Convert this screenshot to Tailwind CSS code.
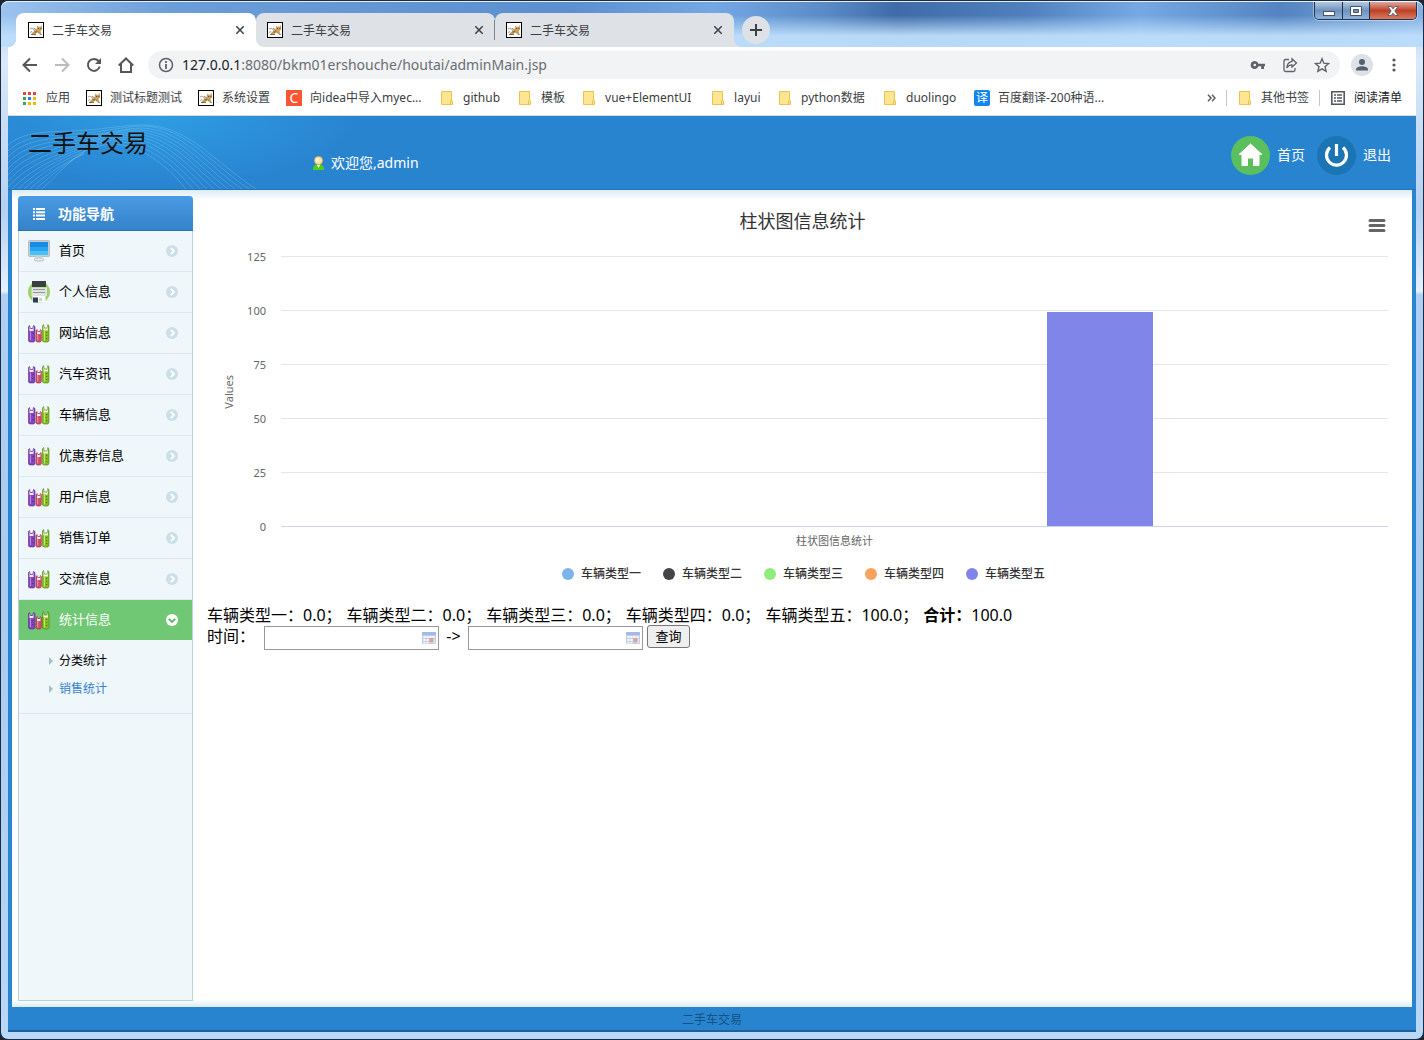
<!DOCTYPE html>
<html lang="zh-CN">
<head>
<meta charset="utf-8">
<title>二手车交易</title>
<script src="https://cdn.jsdelivr.net/npm/@tailwindcss/browser@4"></script>
</head>
<body class="font-['Noto_Sans','Noto_Sans_CJK_SC',sans-serif] text-xs text-black bg-[#1c2430]">

<svg class="hidden" aria-hidden="true">
  <symbol id="cat" viewBox="0 0 16 16">
    <rect x=".5" y=".5" width="15" height="15" fill="#fff" stroke="#000"/>
    <path d="M3 12.500 5 10 7.500 8.500 9 6 9 3.500 10.500 4.800 12.500 4.800 14 3 14 7.500 12.500 9 13.500 12.500 11.500 11.500 9 10.500 7 12.500Z" fill="#c99f5a"/>
    <path d="M2 7 4 6 6 7.500 7 9M2 10.500 4 9.500M10 10 12 12.500H14" stroke="#8a8378" stroke-width=".8" fill="none"/>
    <path d="M3 12.500h5M6 6.500 8 7.500" stroke="#5b5046" stroke-width=".8"/>
    <path d="M10 6.500h1M12.300 6.500h1" stroke="#5c4420" stroke-width=".9"/>
    <path d="M6 9.500 9 8.500 9.500 10 7 11Z" fill="#a5722b"/>
  </symbol>
  <symbol id="folder" viewBox="0 0 16 16">
    <path d="M2.500 1.500h10v10h1v3h-11z" fill="#ffe591" stroke="#e8c54a"/>
    <path d="M11.500 14v-3h2v3z" fill="#ffeeb0" stroke="#e8c54a"/>
  </symbol>
  <symbol id="books" viewBox="0 0 22 22">
    <path d="M.5 4.500 1.500 3.500l.8 3h2.400l.8-3L7 4.500v14L6 20H1.500l-1-1z" fill="#8645bd" stroke="#5d2a91" stroke-width=".6"/>
    <path d="M1.500 4l.8 3h2.400l.8-3v5h-4z" fill="#f2eef7"/><path d="M2.500 9.500v8.500" stroke="#b488dc"/>
    <path d="M8 8.500 9 7.500l.6 2h2.200l.6-2 1 1v10l-1 1.500H9l-1-1z" fill="#cf5063" stroke="#97304a" stroke-width=".6"/>
    <path d="M9 8l.6 2h2.200l.6-2v4H9z" fill="#faeff0"/><path d="M9.700 12v6.500" stroke="#f09aa5"/>
    <path d="M14.500 4 15.500 2.500l.7 3.500h3l.7-3.500L21 4v14.500l-1 1.500h-4.500l-1-1z" fill="#86bd22" stroke="#527f10" stroke-width=".6"/>
    <path d="M15.500 3l.7 3.500h3l.7-3.500v5.500h-4.400z" fill="#f3f9e2"/><path d="M16.500 9v9.500" stroke="#c8e86c"/>
    <path d="M18.700 10v1m0 2v1m0 2v1" stroke="#3f6a0c" stroke-width="1"/><path d="M5 11v1m0 3v1" stroke="#4c1a7d"/>
  </symbol>
  <symbol id="go" viewBox="0 0 12 12">
    <circle cx="6" cy="6" r="6" fill="#cbdfe9"/><path d="M4.800 2.800 8 6 4.800 9.200" fill="none" stroke="#fff" stroke-width="1.900"/>
  </symbol>
  <symbol id="tri" viewBox="0 0 4 8"><path d="M0 0 4 4 0 8z" fill="#a9bdc8"/></symbol>
  <symbol id="x" viewBox="0 0 10 10"><path d="M1.300 1.300l7.400 7.400m0-7.400-7.400 7.400" stroke="#3c4043" stroke-width="1.500"/></symbol>
  <symbol id="cal" viewBox="0 0 14 12">
    <rect width="14" height="12" rx="1" fill="#c3cfe6"/><rect width="14" height="3" rx="1" fill="#a3b9e6"/>
    <path d="M1.500 4h2v2h-2zM4.500 4h2v2h-2zM7.500 4h2v2h-2zM10.500 4h2v2h-2zM1.500 7h2v2h-2zM4.500 7h2v2h-2zM1.500 10h2v1.500h-2zM4.500 10h2v1.500h-2zM11.500 7h1v4h-1z" fill="#fff"/>
    <rect x="7.500" y="6" width="4" height="4" fill="#e5a092"/>
  </symbol>
</svg>

<div class="min-h-screen flex flex-col rounded-lg border border-[#1c2a44] bg-[linear-gradient(180deg,#a9cdf2_0,#dbe9f8_60px,#c9def5_120px,#b5d1f1_210px,#e6f0fb_290px,#b0cff2_294px,#a9cbf0_600px,#b9d7f6_100%)]">

  <!-- title bar -->
  <header class="flex items-start h-[46px] pl-[7px] rounded-t-lg border-t border-[#e4f0fb] bg-[linear-gradient(180deg,transparent_30%,rgba(190,222,252,.95)_75%),linear-gradient(90deg,#9cc3ee_0,#6b9dd8_12%,#5b8fce_40%,#74a8e4_50%,#5a8bc6_58%,#3f6ca8_63%,#4f80bd_72%,#76a9e3_80%,#5384c1_90%,#86b0e2_100%)]">
    <nav class="flex items-end h-[45px] pt-[11px]">
      <i class="w-2 h-2 bg-[radial-gradient(circle_at_top_left,transparent_8px,#fff_8px)]"></i>
      <div class="flex items-center w-60 h-[34px] rounded-t-lg bg-white px-3 text-[#3c4043]">
        <svg class="size-4"><use href="#cat"/></svg><span class="ml-2 pt-[2px] flex-1">二手车交易</span>
        <button aria-label="关闭" class="mr-[-1px]"><svg class="size-[10px]"><use href="#x"/></svg></button>
      </div>
      <div class="bg-[linear-gradient(0deg,#fff_50%,transparent_50%)]"><div class="flex items-center w-[239px] h-[34px] rounded-t-lg rounded-bl-lg bg-[#dee1e6] pl-[11px] text-[#3c4043]">
        <svg class="size-4"><use href="#cat"/></svg><span class="ml-2 pt-[2px] flex-1">二手车交易</span>
        <button aria-label="关闭"><svg class="size-[10px]"><use href="#x"/></svg></button>
        <i class="w-px h-5 bg-[#808388] ml-[10px]"></i>
      </div></div>
      <div class="bg-[linear-gradient(0deg,#dee1e6_50%,transparent_50%)]"><div class="flex items-center w-[239px] h-[34px] rounded-t-lg bg-[#dee1e6] pl-[11px] pr-3 text-[#3c4043]">
        <svg class="size-4"><use href="#cat"/></svg><span class="ml-2 pt-[2px] flex-1">二手车交易</span>
        <button aria-label="关闭" class="mr-[-1px]"><svg class="size-[10px]"><use href="#x"/></svg></button>
      </div></div>
      <i class="w-2 h-2 bg-[radial-gradient(circle_at_top_right,transparent_8px,#dee1e6_8px)]"></i>
      <button aria-label="新标签页" class="size-7 rounded-full bg-[#dee1e6] mb-[3px] flex items-center justify-center">
        <svg class="size-3" viewBox="0 0 12 12"><path d="M6 0v12M0 6h12" stroke="#3c4043" stroke-width="2"/></svg>
      </button>
    </nav>
    <div class="ml-auto mr-[6px] flex h-[18px] rounded-b-[5px] border border-t-0 border-[#1f3350] overflow-hidden shadow-[0_0_0_1px_rgba(255,255,255,.4)]">
      <button aria-label="最小化" class="w-7 border-r border-[#1f3350] bg-linear-to-b from-[#b4c9e2] via-[#6f93bd] to-[#8fb4dc] flex items-center justify-center"><svg class="w-3 h-4" viewBox="0 0 12 16"><rect x=".5" y="8.500" width="11" height="4" fill="#fff" stroke="#48536a"/></svg></button>
      <button aria-label="最大化" class="w-[27px] border-r border-[#1f3350] bg-linear-to-b from-[#b4c9e2] via-[#6f93bd] to-[#8fb4dc] flex items-center justify-center"><svg class="w-3 h-[10px]" viewBox="0 0 12 10"><path d="M.5.5h11v9H.5zM3.500 3.500v3h5v-3z" fill="#fff" fill-rule="evenodd" stroke="#48536a"/></svg></button>
      <button aria-label="关闭窗口" class="w-[46px] bg-linear-to-b from-[#dfa79b] via-[#bd3f28] to-[#d87c5c] flex items-center justify-center"><svg class="w-3 h-[10px]" viewBox="0 0 12 10"><path d="M1 .5h3l2 2.300L8 .5h3L7.800 5 11 9.500H8L6 7.200 4 9.500H1L4.200 5z" fill="#fff" stroke="#48536a" stroke-width=".8"/></svg></button>
    </div>
  </header>

  <div class="flex-1 flex flex-col mx-[7px] mb-[7px] bg-[#2984d0]">
    <!-- toolbar -->
    <div class="flex items-center h-9 pl-[14px] pr-[14px] bg-white text-[#5f6368]">
      <div class="flex gap-4">
        <button aria-label="后退"><svg class="size-4" viewBox="0 0 16 16" fill="none" stroke="#54585d" stroke-width="2"><path d="M15 8H2M8 1.500 1.500 8 8 14.500"/></svg></button>
        <button aria-label="前进"><svg class="size-4" viewBox="0 0 16 16" fill="none" stroke="#babcbe" stroke-width="2"><path d="M1 8h13M8 1.500 14.500 8 8 14.500"/></svg></button>
        <button aria-label="刷新"><svg class="size-4" viewBox="0 0 16 16" fill="none" stroke="#54585d" stroke-width="2"><path d="M13.700 9.500A6 6 0 1 1 12.500 4l1.500 1.500"/><path d="M15 1v6H9z" fill="#54585d" stroke="none"/></svg></button>
        <button aria-label="主页"><svg class="size-4" viewBox="0 0 16 16" fill="none" stroke="#54585d" stroke-width="2"><path d="M.8 8.500 8 1.500l7.200 7M3 7v8h10V7"/></svg></button>
      </div>
      <div class="flex items-center flex-1 h-7 ml-[14px] pl-[10px] pr-[10px] rounded-full bg-[#f1f3f4]">
        <svg class="size-4" viewBox="0 0 16 16" fill="none" stroke="#5f6368"><circle cx="8" cy="8" r="6.500" stroke-width="1.500"/><path d="M8 7v5M8 4v2" stroke-width="1.800"/></svg>
        <a href="#" class="ml-2 flex-1 text-sm text-[#6a6e73]"><span class="text-[#202124]">127.0.0.1</span>:8080/bkm01ershouche/houtai/adminMain.jsp</a>
        <div class="flex gap-4">
          <button aria-label="密码"><svg class="size-4" viewBox="0 0 16 16"><path fill="#5f6368" fill-rule="evenodd" d="M4.800 4a4 4 0 1 0 3.700 5.300h2.700V12H14V9.300h1V6.700H8.500A4 4 0 0 0 4.800 4zm0 2.700a1.300 1.300 0 1 1 0 2.600 1.300 1.300 0 0 1 0-2.600z"/></svg></button>
          <button aria-label="分享"><svg class="size-4" viewBox="0 0 16 16" fill="none" stroke="#5f6368" stroke-width="1.300"><path d="M7 2.500H3.500a1.500 1.500 0 0 0-1.500 1.500v9A1.500 1.500 0 0 0 3.500 14.500h8A1.500 1.500 0 0 0 13 13v-2"/><path d="M10 1.700 14.500 6 10 10V7.800C7.500 7.800 6 8.700 4.800 11 5 7.500 7 4.800 10 4.300z"/></svg></button>
          <button aria-label="收藏"><svg class="size-4" viewBox="0 0 16 16" fill="none" stroke="#5f6368" stroke-width="1.400"><path d="m8 1.800 1.800 4.400 4.800.4-3.600 3.100 1.100 4.600L8 11.800l-4.100 2.500L5 9.700 1.400 6.600l4.800-.4z"/></svg></button>
        </div>
      </div>
      <button aria-label="用户" class="ml-[11px]"><svg class="size-[22px]" viewBox="0 0 22 22"><circle cx="11" cy="11" r="11" fill="#dee1e6"/><circle cx="11" cy="8" r="3" fill="#54606e"/><path d="M5 16.500v-1c0-2 3.500-3.200 6-3.200s6 1.200 6 3.200v1z" fill="#54606e"/></svg></button>
      <button aria-label="菜单" class="ml-[13px]"><svg class="size-4" viewBox="0 0 16 16" fill="#54585d"><circle cx="8" cy="3" r="1.600"/><circle cx="8" cy="8" r="1.600"/><circle cx="8" cy="13" r="1.600"/></svg></button>
    </div>

    <!-- bookmarks -->
    <div class="flex items-center h-[33px] pl-[14px] pr-[14px] pb-[3px] gap-4 bg-white border-b border-[#d9dbde] text-[#3c4043] whitespace-nowrap">
      <a href="#" class="flex items-center gap-2"><svg class="size-4" viewBox="0 0 16 16"><path d="M1 2h3v3H1zM6 2h3v3H6zM11 2h3v3h-3z" fill="#ea4335"/><path d="M1 7h3v3H1zM1 12h3v3H1z" fill="#34a853"/><path d="M6 7h3v3H6z" fill="#1a83f0"/><path d="M11 7h3v3h-3zM6 12h3v3H6zM11 12h3v3h-3z" fill="#f9b50b"/></svg>应用</a>
      <a href="#" class="flex items-center gap-2"><svg class="size-4"><use href="#cat"/></svg>测试标题测试</a>
      <a href="#" class="flex items-center gap-2"><svg class="size-4"><use href="#cat"/></svg>系统设置</a>
      <a href="#" class="flex items-center gap-2 w-[137px]"><span class="size-4 bg-[#fc5531] text-white text-sm leading-4 text-center">C</span>向idea中导入myec...</a>
      <a href="#" class="flex items-center gap-2 w-[62px]"><svg class="size-4"><use href="#folder"/></svg>github</a>
      <a href="#" class="flex items-center gap-2"><svg class="size-4"><use href="#folder"/></svg>模板</a>
      <a href="#" class="flex items-center gap-2 w-[113px]"><svg class="size-4"><use href="#folder"/></svg>vue+ElementUI</a>
      <a href="#" class="flex items-center gap-2 w-[51px]"><svg class="size-4"><use href="#folder"/></svg>layui</a>
      <a href="#" class="flex items-center gap-2 w-[89px]"><svg class="size-4"><use href="#folder"/></svg>python数据</a>
      <a href="#" class="flex items-center gap-2 w-[76px]"><svg class="size-4"><use href="#folder"/></svg>duolingo</a>
      <a href="#" class="flex items-center gap-2"><span class="size-4 rounded-xs bg-[#1485ee] text-white text-xs leading-4 text-center">译</span>百度翻译-200种语...</a>
      <div class="ml-auto flex items-center gap-[10px]">
        <button aria-label="更多"><svg class="w-[9px] h-2" viewBox="0 0 9 8" fill="none" stroke="#5f6368" stroke-width="1.600"><path d="M1 .8 4 4 1 7.200M5 .8 8 4 5 7.200"/></svg></button>
        <i class="w-px h-4 bg-[#c4c6c9]"></i>
        <a href="#" class="flex items-center gap-2"><svg class="size-4"><use href="#folder"/></svg>其他书签</a>
        <i class="w-px h-4 bg-[#c4c6c9]"></i>
        <a href="#" class="flex items-center gap-2 text-[#202124]"><svg class="size-4" viewBox="0 0 16 16"><path d="M1.800 1.800h12.400v12.400H1.800z" fill="none" stroke="#54585d" stroke-width="1.600"/><path d="M4 5h2M4 8h2M4 11h2M7 5h5M7 8h5M7 11h5" stroke="#54585d" stroke-width="1.600"/></svg>阅读清单</a>
      </div>
    </div>

    <!-- site header -->
    <div class="relative flex h-[74px] border-b border-[#2273b8] bg-[radial-gradient(ellipse_200px_70px_at_150px_0,#2e9de3,transparent)] text-white">
      <svg class="absolute left-0 top-0 w-64 h-[73px]" viewBox="0 0 256 73" fill="none" stroke="#8fd0f5" stroke-opacity=".38" stroke-width=".8">
        <path d="M0 29C20 12 50 17 80 14S120 9 135 9C180 9 205 45 248 73"/>
        <path d="M0 35C20 16 50 20 78 17S120 10 135 10C178 11 202 47 241 73"/>
        <path d="M0 41C20 20 50 23 76 20S120 12 134 12C175 14 198 48 234 73"/>
        <path d="M0 47C20 25 50 26 74 22S118 13 133 14C172 17 194 49 227 73"/>
        <path d="M0 53C20 30 50 29 74 24S116 15 132 16C169 20 190 50 220 73"/>
        <path d="M0 59C20 36 50 32 74 26S114 17 130 18C166 23 186 51 213 73"/>
        <path d="M0 65C20 42 50 35 74 28S112 19 128 20C162 26 182 52 206 73"/>
        <path d="M0 71C20 48 50 38 74 30S110 21 126 22C158 29 178 53 199 73"/>
        <path d="M4 73C24 52 50 41 74 32S108 23 124 24C154 32 174 54 192 73"/>
        <path d="M10 73C30 54 52 43 74 34S106 25 122 27C150 35 170 55 185 73"/>
        <path d="M16 73C34 56 54 45 75 36S105 27 120 30C146 38 164 56 178 73"/>
        <path d="M22 73C38 58 56 47 76 38M28 73C43 59 58 47 76 37M34 73C50 58 60 46 78 34"/>
      </svg>
      <h1 class="relative w-[302px] pl-5 pt-[11px] text-2xl leading-8 text-[#111]">二手车交易</h1>
      <div class="flex items-center gap-1 h-[26px] mt-[34px] text-sm">
        <svg class="w-[17px] h-4" viewBox="0 0 17 16"><path d="M3 15c0-4 2-6 5.500-6s5.500 2 5.500 6z" fill="#4fcf17"/><path d="M7 10h3l-1.500 3z" fill="#fff"/><circle cx="8.500" cy="5.500" r="4" fill="#ffe3a1" stroke="#e2a84c" stroke-width=".7"/><circle cx="7.500" cy="5" r="2" fill="#fff6d8"/></svg>
        欢迎您,admin
      </div>
      <div class="ml-auto flex items-center mr-[25px] pt-[5px] text-sm">
        <a href="#" class="flex items-center gap-[7px]"><svg class="size-[39px]" viewBox="0 0 39 39"><circle cx="19.500" cy="19.500" r="19.500" fill="#5bbf5e"/><path d="M19.500 8 31 18.500h-3v11h-5.500V22h-6v7.500H11v-11H8z" fill="#fff" stroke="#fff" stroke-linejoin="round"/></svg>首页</a>
        <a href="#" class="flex items-center gap-[7px] ml-3"><svg class="size-[39px]" viewBox="0 0 39 39"><circle cx="19.500" cy="19.500" r="19.500" fill="#1b74b3"/><path d="M13 11.500a10 10 0 1 0 13 0M19.500 8v12" fill="none" stroke="#fff" stroke-width="3.200"/></svg>退出</a>
      </div>
    </div>

    <!-- content -->
    <div class="flex-1 flex mx-1 pl-[6px] pr-[14px] pt-[6px] pb-[6px] bg-white bg-[linear-gradient(180deg,#dcebf5_0,#fff_10px,#fff_calc(100%_-_7px),#dcebf0_100%)]">
      <aside class="w-[175px] shrink-0 flex flex-col rounded-t-sm border border-t-0 border-[#b9d0de] bg-[#eff7fb] text-[13px]">
        <h2 class="flex items-center h-[35px] -mx-px pl-[14px] pt-px rounded-t-sm border-b border-[#2a72b5] bg-linear-to-b from-[#499be4] to-[#3583c9] text-sm font-bold text-white">
          <svg class="w-[14px] h-3 mr-3" viewBox="0 0 14 12"><path d="M1 1h2M4 1h9M1 4.300h2M4 4.300h9M1 7.600h2M4 7.600h9M1 11h2M4 11h9" stroke="#fff" stroke-width="2"/></svg>功能导航
        </h2>
        <nav>
          <a href="#" class="flex items-center h-[41px] pl-[9px] pr-[14px] border-b border-[#dbe8ef]">
            <svg class="size-[22px] mr-[9px]" viewBox="0 0 22 22"><rect x=".5" y=".5" width="21" height="16" rx="1" fill="#c6ccd0" stroke="#9ea7ad" stroke-width=".6"/><path d="M2 2h18v13H2z" fill="#178ae5"/><path d="M2 7h18v8H2z" fill="#2ba4ef"/><path d="M2 11h18v4H2z" fill="#45c2f8"/><path d="M8.500 16.500h5v2.500h-5z" fill="#dfe3e6"/><ellipse cx="11" cy="19.500" rx="5" ry="1.600" fill="#eef0f1" stroke="#a4abaf" stroke-width=".8"/></svg>
            <span class="flex-1">首页</span><svg class="size-3"><use href="#go"/></svg></a>
          <a href="#" class="flex items-center h-[41px] pl-[9px] pr-[14px] border-b border-[#dbe8ef]">
            <svg class="size-[22px] mr-[9px]" viewBox="0 0 22 22"><circle cx="11" cy="11" r="11" fill="#9dd16c"/><path d="M4 0h14v6H4z" fill="#3b3f42"/><path d="M3.500 6.500h15.500v8.500H3.500z" fill="#dfe3e1"/><path d="M5 8.500h12M5 11.500h12" stroke="#8f9a92"/><path d="M4.500 15h13v6.500h-13z" fill="#fafbfa"/><path d="M5 16.500h5v5H5z" fill="#2d3c52"/><path d="M11 17h3v3h-3z" fill="#c5d3df"/></svg>
            <span class="flex-1">个人信息</span><svg class="size-3"><use href="#go"/></svg></a>
          <a href="#" class="flex items-center h-[41px] pl-[9px] pr-[14px] border-b border-[#dbe8ef]"><svg class="size-[22px] mr-[9px]"><use href="#books"/></svg><span class="flex-1">网站信息</span><svg class="size-3"><use href="#go"/></svg></a>
          <a href="#" class="flex items-center h-[41px] pl-[9px] pr-[14px] border-b border-[#dbe8ef]"><svg class="size-[22px] mr-[9px]"><use href="#books"/></svg><span class="flex-1">汽车资讯</span><svg class="size-3"><use href="#go"/></svg></a>
          <a href="#" class="flex items-center h-[41px] pl-[9px] pr-[14px] border-b border-[#dbe8ef]"><svg class="size-[22px] mr-[9px]"><use href="#books"/></svg><span class="flex-1">车辆信息</span><svg class="size-3"><use href="#go"/></svg></a>
          <a href="#" class="flex items-center h-[41px] pl-[9px] pr-[14px] border-b border-[#dbe8ef]"><svg class="size-[22px] mr-[9px]"><use href="#books"/></svg><span class="flex-1">优惠券信息</span><svg class="size-3"><use href="#go"/></svg></a>
          <a href="#" class="flex items-center h-[41px] pl-[9px] pr-[14px] border-b border-[#dbe8ef]"><svg class="size-[22px] mr-[9px]"><use href="#books"/></svg><span class="flex-1">用户信息</span><svg class="size-3"><use href="#go"/></svg></a>
          <a href="#" class="flex items-center h-[41px] pl-[9px] pr-[14px] border-b border-[#dbe8ef]"><svg class="size-[22px] mr-[9px]"><use href="#books"/></svg><span class="flex-1">销售订单</span><svg class="size-3"><use href="#go"/></svg></a>
          <a href="#" class="flex items-center h-[41px] pl-[9px] pr-[14px] border-b border-[#dbe8ef]"><svg class="size-[22px] mr-[9px]"><use href="#books"/></svg><span class="flex-1">交流信息</span><svg class="size-3"><use href="#go"/></svg></a>
          <a href="#" class="flex items-center h-10 pl-[9px] pr-[14px] bg-[#70c774] text-white"><svg class="size-[22px] mr-[9px]"><use href="#books"/></svg><span class="flex-1">统计信息</span>
            <svg class="size-3" viewBox="0 0 12 12"><circle cx="6" cy="6" r="6" fill="#fff"/><path d="M2.800 4.800 6 8 9.200 4.800" fill="none" stroke="#5fbb64" stroke-width="1.900"/></svg></a>
          <div class="flex flex-col h-[74px] pt-[7px] border-b border-[#dbe8ef] text-xs">
            <a href="#" class="flex items-center h-7 pl-[30px] gap-[6px]"><svg class="w-1 h-2"><use href="#tri"/></svg>分类统计</a>
            <a href="#" class="flex items-center h-7 pl-[30px] gap-[6px] text-[#3583d0]"><svg class="w-1 h-2"><use href="#tri"/></svg>销售统计</a>
          </div>
        </nav>
      </aside>

      <main class="flex-1 min-w-0 pl-[14px]">
        <section class="pt-[11px] pr-[10px] text-[#666]">
          <div class="relative h-[49px]">
            <h3 class="text-center text-lg leading-7 text-[#333] pl-[10px]">柱状图信息统计</h3>
            <button aria-label="图表菜单" class="absolute right-[2px] top-[11px]"><svg class="w-[18px] h-[15px]" viewBox="0 0 18 15"><path d="M2 2.500h14M2 7.500h14M2 12.500h14" stroke="#666" stroke-width="3" stroke-linecap="round"/></svg></button>
          </div>
          <div class="flex h-[271px] text-[11px] leading-4">
            <div class="w-11 flex items-center justify-center"><span class="[writing-mode:vertical-rl] rotate-180">Values</span></div>
            <div class="w-[15px] flex flex-col items-end justify-between -mt-[7px] -mb-2"><span>125</span><span>100</span><span>75</span><span>50</span><span>25</span><span>0</span></div>
            <div class="relative flex-1 flex flex-col ml-[15px] border-b border-[#ccd6eb]">
              <i class="flex-1 border-t border-[#e6e6e6]"></i><i class="flex-1 border-t border-[#e6e6e6]"></i><i class="flex-1 border-t border-[#e6e6e6]"></i><i class="flex-1 border-t border-[#e6e6e6]"></i><i class="flex-1 border-t border-[#e6e6e6]"></i>
              <div class="absolute bottom-0 bg-[#8085e9]" style="left:69.2%;width:9.6%;height:79.4%"></div>
            </div>
          </div>
          <p class="pl-[74px] pt-1 text-center text-[11px] leading-5">柱状图信息统计</p>
          <ul class="flex justify-center gap-[22px] pt-[11px] pl-3 leading-6 font-medium text-[#333]">
            <li class="flex items-center gap-[7px]"><i class="size-3 rounded-full bg-[#7cb5ec]"></i>车辆类型一</li>
            <li class="flex items-center gap-[7px]"><i class="size-3 rounded-full bg-[#434348]"></i>车辆类型二</li>
            <li class="flex items-center gap-[7px]"><i class="size-3 rounded-full bg-[#90ed7d]"></i>车辆类型三</li>
            <li class="flex items-center gap-[7px]"><i class="size-3 rounded-full bg-[#f7a35c]"></i>车辆类型四</li>
            <li class="flex items-center gap-[7px]"><i class="size-3 rounded-full bg-[#8085e9]"></i>车辆类型五</li>
          </ul>
        </section>
        <p class="mt-[19px] flex gap-[5px] text-base leading-[21px]"><span>车辆类型一：0.0；</span><span>车辆类型二：0.0；</span><span>车辆类型三：0.0；</span><span>车辆类型四：0.0；</span><span>车辆类型五：100.0；</span><span><b>合计：</b>100.0</span></p>
        <form class="flex items-start text-base leading-[21px]">
          <label for="from" class="w-[57px]">时间：</label>
          <div class="relative"><input id="from" type="text" class="block w-[175px] h-6 border border-[#999] bg-white px-1 text-sm"><svg class="absolute right-[3px] top-[6px] w-[14px] h-3"><use href="#cal"/></svg></div>
          <label for="to" class="w-[29px] text-center">-&gt;</label>
          <div class="relative"><input id="to" type="text" class="block w-[175px] h-6 border border-[#999] bg-white px-1 text-sm"><svg class="absolute right-[3px] top-[6px] w-[14px] h-3"><use href="#cal"/></svg></div>
          <button type="button" class="ml-1 -mt-px w-[43px] h-[23px] rounded-[3px] border border-[#767676] bg-[#efefef] text-[13px] leading-[21px]">查询</button>
        </form>
      </main>
    </div>

    <footer class="h-[25px] pt-px border-b-2 border-[#1d5f9c] text-center leading-6 text-[#145283]">二手车交易</footer>
  </div>
</div>
</body>
</html>
